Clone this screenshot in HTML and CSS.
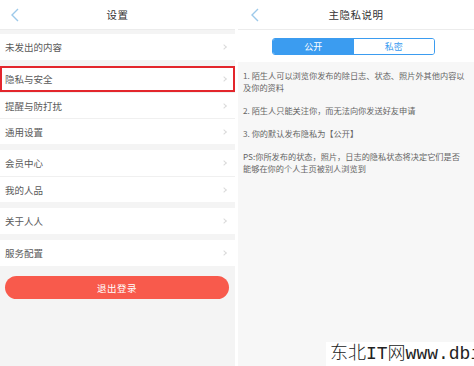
FILE: index.html
```html
<!DOCTYPE html>
<html lang="zh">
<head>
<meta charset="utf-8">
<link rel="stylesheet" href="styles.css">
</head>
<body>
<div class="screen">
  <section class="panel left">
    <header class="bar">
      <svg class="back" width="10" height="14" viewBox="0 0 10 14"><path d="M8 1 L2 7 L8 13" fill="none" stroke="#9cc9ea" stroke-width="1.4"/></svg>
      <span class="title">设置</span>
    </header>
    <div class="list">
      <div class="group">
        <div class="row">未发出的内容<span class="chev"></span></div>
      </div>
      <div class="group">
        <div class="row mark">隐私与安全<span class="chev"></span></div>
        <div class="row">提醒与防打扰<span class="chev"></span></div>
        <div class="row">通用设置<span class="chev"></span></div>
      </div>
      <div class="group">
        <div class="row">会员中心<span class="chev"></span></div>
        <div class="row">我的人品<span class="chev"></span></div>
      </div>
      <div class="group">
        <div class="row">关于人人<span class="chev"></span></div>
      </div>
      <div class="group">
        <div class="row">服务配置<span class="chev"></span></div>
      </div>
      <button class="logout">退出登录</button>
    </div>
  </section>
  <section class="panel right">
    <header class="bar">
      <svg class="back" width="10" height="14" viewBox="0 0 10 14"><path d="M8 1 L2 7 L8 13" fill="none" stroke="#9cc9ea" stroke-width="1.4"/></svg>
      <span class="title">主隐私说明</span>
    </header>
    <div class="segwrap">
      <div class="seg">
        <span class="opt on">公开</span>
        <span class="opt">私密</span>
      </div>
    </div>
    <div class="content">
      <p>1. 陌生人可以浏览你发布的除日志、状态、照片外其他内容以<br>及你的资料</p>
      <p>2. 陌生人只能关注你，而无法向你发送好友申请</p>
      <p>3. 你的默认发布隐私为【公开】</p>
      <p>PS:你所发布的状态，照片，日志的隐私状态将决定它们是否<br>能够在你的个人主页被别人浏览到</p>
    </div>
  </section>
  <div class="watermark">东北IT网www.dbi</div>
</div>
</body>
</html>
```
FILE: styles.css
```css
* { box-sizing: border-box; margin: 0; padding: 0; }
html, body { width: 474px; height: 366px; overflow: hidden; background: #fff; }
body { font-family: "Noto Sans CJK SC", "Noto Sans", sans-serif; }
.screen { position: relative; display: flex; gap: 3px; width: 474px; height: 366px; }
.panel { display: flex; flex-direction: column; height: 366px; }
.left { width: 235px; background: #f4f4f4; }
.right { flex: 1; background: #f7f7f7; }
.bar { position: relative; height: 30px; background: #fff; border-bottom: 1px solid #ececec; display: flex; align-items: center; justify-content: center; flex-shrink: 0; }
.bar .back { position: absolute; left: 10px; top: 8px; }
.title { font-size: 10.5px; color: #333; letter-spacing: 0.5px; }
.list { display: flex; flex-direction: column; gap: 6px; padding-top: 4px; }
.group { background: #fff; display: flex; flex-direction: column; }
.row { position: relative; height: 26px; display: flex; align-items: center; padding-left: 5px; font-size: 9.5px; color: #5a5a5a; border-top: 1px solid #f0f0f0; }
.row:first-child { border-top: none; }
.chev { position: absolute; right: 9px; top: 11px; width: 4px; height: 4px; border-top: 1px solid #dadada; border-right: 1px solid #dadada; transform: rotate(45deg); }
.mark { outline: 2px solid #e3262c; outline-offset: -2px; }
.logout { margin: 4px 6px 0 5px; height: 23px; border: none; border-radius: 12px; background: #f85a4c; color: #fff; font-family: inherit; font-size: 9.5px; letter-spacing: 0.5px; }
.right .bar .back { left: 12px; }
.segwrap { background: #fff; height: 32px; display: flex; align-items: center; justify-content: center; flex-shrink: 0; padding-right: 5px; }
.seg { display: flex; width: 163px; height: 17px; border: 1px solid #3b9cf0; border-radius: 3px; overflow: hidden; }
.opt { flex: 1; display: flex; align-items: center; justify-content: center; font-size: 9px; color: #3b9cf0; background: #fff; }
.opt.on { background: #3b9cf0; color: #fff; }
.content { padding: 7px 4px 0 5px; display: flex; flex-direction: column; gap: 11px; }
.content p { font-size: 8.2px; line-height: 12px; color: #666; white-space: nowrap; }
.watermark { position: absolute; left: 326px; top: 342px; width: 148px; height: 24px; background: #fff; padding-left: 4px; font-family: "Liberation Mono", "Noto Sans CJK SC", monospace; font-weight: 300; font-size: 18px; line-height: 24px; color: #222; white-space: nowrap; overflow: hidden; }
```
